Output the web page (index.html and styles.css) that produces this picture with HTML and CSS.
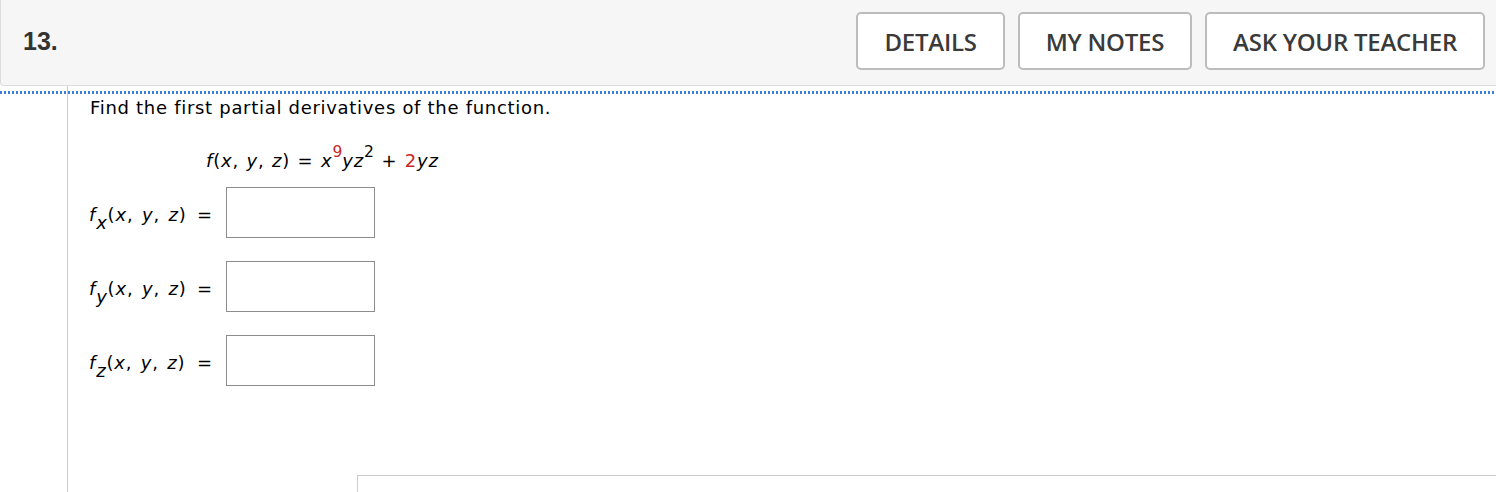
FILE: index.html
```html
<!DOCTYPE html>
<html lang="en">
<head>
<meta charset="utf-8">
<title>Question 13</title>
<link rel="stylesheet" href="styles.css">
</head>
<body>
<div class="page">
  <header class="qhead">
    <div class="qnum">13.</div>
    <div class="actions">
      <button class="btn" type="button">DETAILS</button>
      <button class="btn" type="button">MY NOTES</button>
      <button class="btn" type="button">ASK YOUR TEACHER</button>
    </div>
  </header>
  <div class="qbody">
    <div class="gutter"></div>
    <div class="content">
      <p class="prompt">Find the first partial derivatives of the function.</p>
      <p class="equation"><i>f</i>(<i>x</i>, <i>y</i>, <i>z</i>) = <i>x</i><sup class="red">9</sup><i>yz</i><sup>2</sup> + <span class="red">2</span><i>yz</i></p>
      <div class="answers">
        <div class="row">
          <span class="label"><i>f</i><sub><i>x</i></sub>(<i>x</i>, <i>y</i>, <i>z</i>)</span>
          <span class="eq">=</span>
          <span class="box"></span>
        </div>
        <div class="row">
          <span class="label"><i>f</i><sub><i>y</i></sub>(<i>x</i>, <i>y</i>, <i>z</i>)</span>
          <span class="eq">=</span>
          <span class="box"></span>
        </div>
        <div class="row">
          <span class="label"><i>f</i><sub><i>z</i></sub>(<i>x</i>, <i>y</i>, <i>z</i>)</span>
          <span class="eq">=</span>
          <span class="box"></span>
        </div>
      </div>
      <div class="footer-box"></div>
    </div>
  </div>
</div>
</body>
</html>
```
FILE: styles.css
```css
html, body {
  margin: 0;
  padding: 0;
  height: 100%;
  overflow: hidden;
  background: #fff;
}

.page {
  display: flex;
  flex-direction: column;
  height: 100%;
  font-family: "DejaVu Sans", Verdana, sans-serif;
  color: #000;
}

.qhead {
  display: flex;
  align-items: center;
  justify-content: space-between;
  height: 82px;
  padding: 0 11px 3px 22px;
  background: #f6f6f6;
  border-left: 1px solid #dcdcdc;
  border-bottom: 1px solid #dcdcdc;
  border-bottom-left-radius: 4px;
  flex: none;
}

.qnum {
  font-family: "Liberation Sans", Arial, sans-serif;
  font-weight: 700;
  font-size: 25px;
  color: #333;
}

.actions {
  display: flex;
  gap: 13px;
}

.btn {
  height: 58px;
  padding: 0 26px;
  background: #fff;
  border: 2px solid #bcbcbc;
  border-radius: 5px;
  font-family: "Open Sans", sans-serif;
  font-weight: 600;
  font-size: 24px;
  color: #3a3a3a;
  letter-spacing: -0.25px;
}

.qbody {
  flex: 1;
  display: flex;
  background: linear-gradient(to right, #3d7fdc 55%, transparent 55%) 0 5px / 4px 3px repeat-x;
}

.gutter {
  width: 67px;
  flex: none;
  border-right: 1px solid #cccccc;
}

.content {
  flex: 1;
  display: flex;
  flex-direction: column;
  padding-left: 22px;
  min-width: 0;
}

.prompt {
  margin: 11px 0 0;
  font-size: 18px;
  line-height: 22px;
  letter-spacing: 0.7px;
}

.equation {
  margin: 31px 0 0 116px;
  font-size: 18px;
  line-height: 22px;
  letter-spacing: 0.8px;
  word-spacing: 1px;
}

.equation sup {
  font-size: 15.5px;
  line-height: 0;
  vertical-align: 10px;
  letter-spacing: 0;
}

.red {
  color: #c62828;
}

.answers {
  display: flex;
  flex-direction: column;
  gap: 23px;
  margin-top: 15px;
  margin-left: -1px;
}

.row {
  display: flex;
  align-items: flex-start;
  height: 51px;
  font-size: 18px;
  line-height: 22px;
}

.label {
  width: 108px;
  padding-top: 17px;
  white-space: nowrap;
  letter-spacing: 0.8px;
  word-spacing: 2px;
}

.label sub {
  font-size: 18px;
  line-height: 0;
  vertical-align: -8px;
}

.eq {
  width: 29px;
  padding-top: 17px;
}

.box {
  width: 147px;
  height: 49px;
  border: 1px solid #8c8c8c;
  background: #fff;
}

.footer-box {
  flex: 1;
  margin: 89px -1px 0 267px;
  border-top: 1px solid #cccccc;
  border-left: 1px solid #cccccc;
}
```
